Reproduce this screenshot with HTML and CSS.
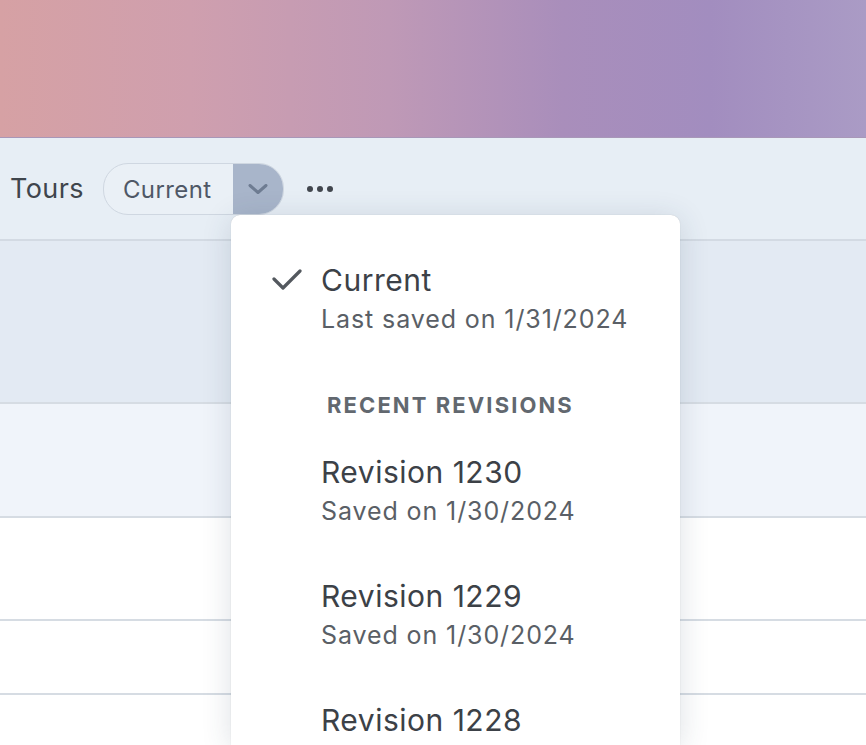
FILE: index.html
```html
<!DOCTYPE html>
<html lang="en">
<head>
    <meta charset="UTF-8">
    <meta name="viewport" content="width=device-width, initial-scale=1.0">
    <title>Tours - Revisions</title>
    <link rel="stylesheet" href="styles.css">
</head>
<body>
    <div class="banner"></div>
    <div class="toolbar">
        <span class="page-title">Tours</span>
        <div class="revision-picker">
            <span class="picker-label">Current</span>
            <span class="picker-toggle">
                <svg width="20" height="10" viewBox="0 0 20 10"><path d="M2 1.5 L10 8.5 L18 1.5" fill="none" stroke="#6e7c92" stroke-width="3" stroke-linecap="round" stroke-linejoin="round"/></svg>
            </span>
        </div>
        <span class="more-btn"><i></i><i></i><i></i></span>
    </div>
    <div class="rows">
        <div class="row row-head"></div>
        <div class="row row-sub"></div>
        <div class="row row-a"></div>
        <div class="row row-b"></div>
        <div class="row row-c"></div>
    </div>

    <!-- menu ouvert des revisions -->
    <div class="menu">
        <div class="menu-item selected">
            <span class="check">
                <svg width="30" height="22" viewBox="0 0 30 22"><path d="M2 10 L11 19 L28 2" fill="none" stroke="#53585e" stroke-width="3.2" stroke-linecap="round" stroke-linejoin="round"/></svg>
            </span>
            <div class="item-title">Current</div>
            <div class="item-sub">Last saved on 1/31/2024</div>
        </div>
        <div class="menu-heading">Recent Revisions</div>
        <div class="menu-item">
            <div class="item-title">Revision 1230</div>
            <div class="item-sub">Saved on 1/30/2024</div>
        </div>
        <div class="menu-item">
            <div class="item-title">Revision 1229</div>
            <div class="item-sub">Saved on 1/30/2024</div>
        </div>
        <div class="menu-item">
            <div class="item-title">Revision 1228</div>
        </div>
    </div>
</body>
</html>
```

FILE: styles.css
```css
html, body {
    height: 745px;
    overflow: hidden;
}

body {
    font-family: Inter, "Noto Sans", sans-serif;
    margin: 0;
    padding: 0;
    background-color: #fff;
    position: relative;
}

.banner {
    height: 137px;
    background: linear-gradient(90deg, #d6a1a4 0%, #cf9fae 22%, #bf99b6 45%, #a98ebb 65%, #a28dbf 82%, #aa9bc5 100%);
    border-bottom: 1px solid #a897b8;
}

.toolbar {
    height: 101px;
    background-color: #e7eef5;
    border-bottom: 2px solid #d3dae3;
    display: flex;
    align-items: center;
    padding-left: 10px;
}

.page-title {
    font-size: 27px;
    letter-spacing: 0.4px;
    color: #3f454c;
    margin-right: 19px;
}

.revision-picker {
    display: flex;
    height: 50px;
    border-radius: 25px;
    border: 1px solid #cfd7e1;
    background: #eaf0f6;
    overflow: hidden;
    margin-top: 1px;
}

.picker-label {
    display: flex;
    align-items: center;
    padding: 0 22px 0 19px;
    font-size: 24px;
    letter-spacing: 0.4px;
    color: #4f5866;
}

.picker-toggle {
    width: 50px;
    display: flex;
    align-items: center;
    justify-content: center;
    background: #a8b5ca;
}

.more-btn {
    display: flex;
    gap: 4px;
    margin-left: 23px;
}

.more-btn i {
    width: 6px;
    height: 6px;
    border-radius: 50%;
    background: #41464d;
}

.row {
    border-bottom: 2px solid #d6dce3;
}

.row-head {
    height: 161px;
    background: #e3eaf3;
}

.row-sub {
    height: 112px;
    background: #f0f4fa;
}

.row-a {
    height: 101px;
}

.row-b {
    height: 72px;
}

.row-c {
    height: 49px;
    border-bottom: none;
}

.menu {
    position: absolute;
    left: 231px;
    top: 215px;
    width: 449px;
    height: 530px;
    overflow: hidden;
    background: #fff;
    border-radius: 9px 9px 0 0;
    box-shadow: 0 4px 30px rgba(40, 60, 90, 0.16), 0 0 1px rgba(0, 0, 0, 0.2);
    padding-top: 46px;
    box-sizing: border-box;
}

.menu-item {
    position: relative;
    padding-left: 90px;
    margin-bottom: 46px;
}

.check {
    position: absolute;
    left: 41px;
    top: 8px;
}

.item-title {
    font-size: 30px;
    line-height: 38px;
    letter-spacing: 0.5px;
    color: #3c4147;
}

.item-sub {
    font-size: 25px;
    line-height: 40px;
    letter-spacing: 0.9px;
    color: #5a5f66;
}

.menu-heading {
    padding-left: 96px;
    font-size: 22px;
    line-height: 30px;
    font-weight: 700;
    letter-spacing: 2.1px;
    text-transform: uppercase;
    color: #62686f;
    margin: 51px 0 33px;
}
```
